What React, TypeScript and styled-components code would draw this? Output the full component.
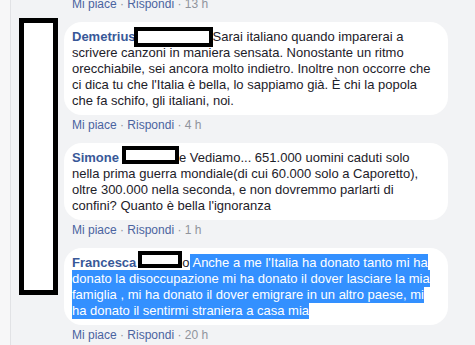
import React from "react";
import styled, { createGlobalStyle } from "styled-components";

const Global = createGlobalStyle`
  html, body { margin: 0; padding: 0; background: #f2f3f5; overflow: hidden; }
  body { font-family: "Liberation Sans", Arial, sans-serif; }
`;

const Page = styled.div`
  display: flex;
  align-items: flex-start;
  width: 475px;
  height: 345px;
  overflow: hidden;
  background: #f2f3f5;
`;

const Strip = styled.div`
  width: 10px;
  height: 345px;
  background: #f7f7f8;
  border-right: 1px solid #e1e2e5;
  flex: none;
`;

const AvatarColumn = styled.div`
  flex: none;
  padding: 18px 6px 0 8px;
`;

const BigRedaction = styled.div`
  width: 29px;
  height: 267px;
  border: 5px solid #000;
  background: #fff;
`;

const Thread = styled.div`
  display: flex;
  flex-direction: column;
  width: 384px;
  margin-top: -6px;
`;

const Comment = styled.div`
  display: flex;
  flex-direction: column;
  margin-bottom: 10px;
`;

const Bubble = styled.div`
  background: #fff;
  border-radius: 18px;
  padding: 7px 14px 6px 8px;
  font-size: 13px;
  line-height: 16px;
  color: #1d2129;
`;

const Name = styled.span`
  font-weight: bold;
  color: #385898;
`;

const Redact = styled.span<{ $w: number; $h: number; $ml: number; $dy: number }>`
  display: inline-block;
  box-sizing: border-box;
  width: ${(p) => p.$w}px;
  height: ${(p) => p.$h}px;
  margin: ${(p) => -(p.$h - 16) / 2}px 0 ${(p) => -(p.$h - 16) / 2}px ${(p) => p.$ml}px;
  vertical-align: top;
  position: relative;
  top: ${(p) => p.$dy}px;
  border: 4px solid #000;
  background: #fff;
`;

const Selected = styled.span`
  background: #3390ff;
  color: #fff;
  padding: 1px 0;
`;

const Meta = styled.div`
  display: flex;
  align-items: center;
  height: 16px;
  margin-top: 2px;
  padding-left: 8px;
  font-size: 12px;
  line-height: 16px;
  color: #90949c;
  white-space: pre;
`;

const Action = styled.span`
  color: #4b64a0;
`;

const MetaRow = ({ time }: { time: string }) => (
  <Meta>
    <Action>Mi piace</Action>
    {" · "}
    <Action>Rispondi</Action>
    {" · "}
    {time}
  </Meta>
);

export default function App() {
  return (
    <>
      <Global />
      <Page>
        <Strip />
        <AvatarColumn>
          <BigRedaction />
        </AvatarColumn>
        <Thread>
          <Comment>
            <MetaRow time="13 h" />
          </Comment>
          <Comment>
            <Bubble>
              <Name>Demetrius</Name>
              <Redact $w={79} $h={20} $ml={-2} $dy={0} />
              Sarai italiano quando imparerai a scrivere canzoni in maniera
              sensata. Nonostante un ritmo orecchiabile, sei ancora molto
              indietro. Inoltre non occorre che ci dica tu che l'Italia è bella,
              lo sappiamo già. È chi la popola che fa schifo, gli italiani, noi.
            </Bubble>
            <MetaRow time="4 h" />
          </Comment>
          <Comment>
            <Bubble>
              <Name>Simone</Name>
              <Redact $w={57} $h={18} $ml={3} $dy={-3} />
              e Vediamo... 651.000 uomini caduti solo nella prima guerra
              mondiale(di cui 60.000 solo a Caporetto), oltre 300.000 nella
              seconda, e non dovremmo parlarti di confini? Quanto è bella
              l'ignoranza
            </Bubble>
            <MetaRow time="1 h" />
          </Comment>
          <Comment>
            <Bubble>
              <Name>Francesca</Name>
              <Redact $w={44} $h={17} $ml={2} $dy={-4} />
              o
              <Selected>
                {" "}Anche a me l'Italia ha donato tanto mi ha donato la
                disoccupazione mi ha donato il dover lasciare la mia famiglia ,
                mi ha donato il dover emigrare in un altro paese, mi ha donato il
                sentirmi straniera a casa mia
              </Selected>
            </Bubble>
            <MetaRow time="20 h" />
          </Comment>
        </Thread>
      </Page>
    </>
  );
}
